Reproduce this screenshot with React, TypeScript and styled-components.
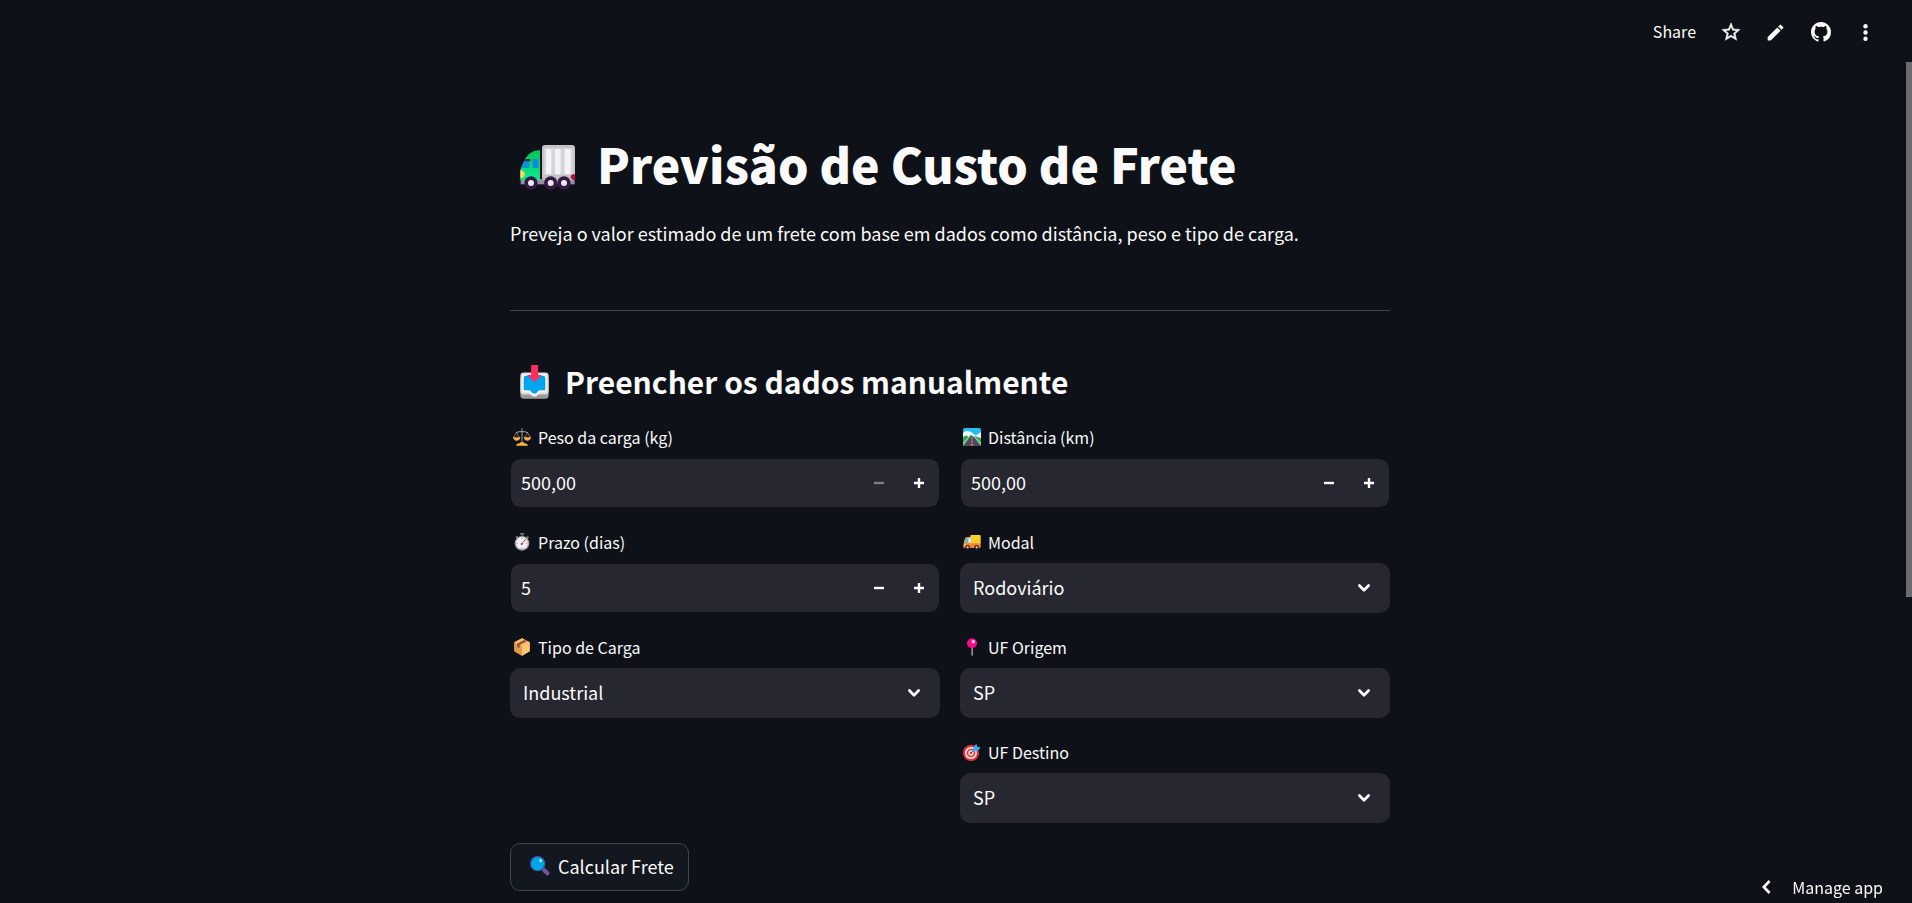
import React, { useId, useState } from "react";
import styled, { createGlobalStyle } from "styled-components";

const color = {
  page: "#0e1117",
  field: "#262730",
  text: "#fafafa",
  muted: "#7d7e85",
  line: "#42444c",
  button: "#13171f",
  buttonLine: "#41444c",
  thumb: "#6b6c70",
};

const GlobalStyle = createGlobalStyle`
  *, *::before, *::after { box-sizing: border-box; }
  body {
    margin: 0;
    background: ${color.page};
    color: ${color.text};
    font-family: "Noto Sans CJK SC", "Noto Sans", sans-serif;
    font-size: 18px;
    line-height: 30px;
  }
  button, input, select { font: inherit; color: inherit; }
`;

const Page = styled.div`
  min-height: 100vh;
  padding-right: 12px;
`;

const Toolbar = styled.header`
  display: flex;
  justify-content: flex-end;
  align-items: center;
  height: 64px;
  padding-right: 12px;
`;

const ToolButton = styled.button<{ $text?: boolean }>`
  display: flex;
  align-items: center;
  justify-content: center;
  min-width: 45px;
  height: 40px;
  padding: ${(p) => (p.$text ? "0 12px 2px" : "0")};
  border: 0;
  background: none;
  font-size: 16px;
  cursor: pointer;
`;

const Main = styled.main`
  max-width: 880px;
  margin: 0 auto;
  padding-top: 69px;
`;

const Title = styled.h1`
  display: flex;
  align-items: center;
  gap: 21px;
  margin: 0;
  padding: 0 0 6px 10px;
  font-size: 48px;
  line-height: 60px;
  font-weight: 900;
  > svg { margin-top: 8px; }
`;

const Intro = styled.p`
  margin: 19px 0 62px;
`;

const Divider = styled.hr`
  margin: 0 0 50px;
  border: 0;
  border-top: 1px solid ${color.line};
`;

const Subtitle = styled.h2`
  display: flex;
  align-items: center;
  gap: 16px;
  margin: 0 0 20px;
  padding: 0 0 2px 10px;
  font-size: 30px;
  line-height: 40px;
  font-weight: 700;
  > svg { margin-top: 2px; }
`;

const Form = styled.form`
  display: flex;
  flex-direction: column;
  align-items: flex-start;
  gap: 20px;
`;

const Columns = styled.div`
  display: grid;
  grid-template-columns: 1fr 1fr;
  gap: 20px;
  width: 100%;
`;

const Column = styled.div`
  display: flex;
  flex-direction: column;
  gap: 20px;
`;

const Field = styled.div`
  display: flex;
  flex-direction: column;
  gap: 7px;
`;

const FieldLabel = styled.label`
  display: flex;
  align-items: center;
  gap: 7px;
  padding-left: 3px;
  font-size: 16px;
  line-height: 28px;
`;

const NumberBox = styled.div`
  display: flex;
  height: 50px;
  border: 1px solid ${color.page};
  border-radius: 10px;
  background: ${color.field};
  background-clip: padding-box;
`;

const NumberInput = styled.input`
  flex: 1;
  min-width: 0;
  padding: 0 10px 2px;
  border: 0;
  outline: 0;
  background: none;
`;

const StepButton = styled.button`
  display: flex;
  align-items: center;
  justify-content: center;
  width: 40px;
  padding: 0;
  border: 0;
  background: none;
  cursor: pointer;
  &:disabled {
    color: ${color.muted};
    cursor: default;
  }
`;

const SelectBox = styled.div`
  display: grid;
  align-items: center;
  height: 50px;
  border-radius: 10px;
  background: ${color.field};
  > * { grid-area: 1 / 1; }
  > svg {
    justify-self: end;
    margin-right: 20px;
    pointer-events: none;
  }
`;

const Select = styled.select`
  appearance: none;
  width: 100%;
  height: 50px;
  padding: 0 40px 2px 13px;
  border: 0;
  border-radius: 10px;
  outline: 0;
  background: none;
  option { background: ${color.field}; }
`;

const SubmitButton = styled.button`
  display: flex;
  align-items: center;
  gap: 8px;
  height: 48px;
  padding: 0 14px 2px 19px;
  border: 1px solid ${color.buttonLine};
  border-radius: 10px;
  background: ${color.button};
  cursor: pointer;
`;

const ManageButton = styled.button`
  position: fixed;
  right: 17px;
  bottom: 0;
  display: flex;
  align-items: center;
  gap: 21px;
  height: 30px;
  padding: 0 12px 2px;
  border: 0;
  background: ${color.page};
  font-size: 16px;
  cursor: pointer;
`;

const ScrollThumb = styled.div`
  position: fixed;
  top: 62px;
  right: 0;
  width: 6px;
  height: 59.2vh;
  background: ${color.thumb};
`;

/* ---------- toolbar and control icons ---------- */

const StarIcon = () => (
  <svg width="22" height="22" viewBox="0 0 24 24" fill="currentColor" stroke="currentColor" strokeWidth="0.5" aria-hidden="true">
    <path d="M22 9.24l-7.19-.62L12 2 9.19 8.63 2 9.24l5.46 4.73L5.82 21 12 17.27 18.18 21l-1.63-7.03L22 9.24zM12 15.4l-3.76 2.27 1-4.28-3.32-2.88 4.38-.38L12 6.1l1.71 4.04 4.38.38-3.32 2.88 1 4.28L12 15.4z" />
  </svg>
);

const PencilIcon = () => (
  <svg width="21" height="21" viewBox="0 0 24 24" fill="currentColor" aria-hidden="true">
    <path d="M3 17.46v3.04c0 .28.22.5.5.5h3.04c.13 0 .26-.05.35-.15L17.81 9.94l-3.75-3.75L3.15 17.1c-.1.1-.15.22-.15.36zM20.71 7.04a.996.996 0 0 0 0-1.41l-2.34-2.34a.996.996 0 0 0-1.41 0l-1.83 1.83 3.75 3.75 1.83-1.83z" />
  </svg>
);

const GithubIcon = () => (
  <svg width="20" height="20" viewBox="0 0 16 16" fill="currentColor" aria-hidden="true">
    <path d="M8 0C3.58 0 0 3.58 0 8c0 3.54 2.29 6.53 5.47 7.59.4.07.55-.17.55-.38 0-.19-.01-.82-.01-1.49-2.01.37-2.53-.49-2.69-.94-.09-.23-.48-.94-.82-1.13-.28-.15-.68-.52-.01-.53.63-.01 1.08.58 1.23.82.72 1.21 1.87.87 2.33.66.07-.52.28-.87.51-1.07-1.78-.2-3.64-.89-3.64-3.95 0-.87.31-1.59.82-2.15-.08-.2-.36-1.02.08-2.12 0 0 .67-.21 2.2.82.64-.18 1.32-.27 2-.27s1.36.09 2 .27c1.53-1.04 2.2-.82 2.2-.82.44 1.1.16 1.92.08 2.12.51.56.82 1.27.82 2.15 0 3.07-1.87 3.75-3.65 3.95.29.25.54.73.54 1.48 0 1.07-.01 1.93-.01 2.2 0 .21.15.46.55.38A8.01 8.01 0 0 0 16 8c0-4.42-3.58-8-8-8z" />
  </svg>
);

const DotsIcon = () => (
  <svg width="25" height="25" viewBox="0 0 24 24" fill="currentColor" aria-hidden="true">
    <circle cx="12" cy="6" r="2.1" />
    <circle cx="12" cy="12" r="2.1" />
    <circle cx="12" cy="18" r="2.1" />
  </svg>
);

const MinusIcon = () => (
  <svg width="10" height="10" viewBox="0 0 10 10" aria-hidden="true">
    <path d="M0 5h10" stroke="currentColor" strokeWidth="2.4" />
  </svg>
);

const PlusIcon = () => (
  <svg width="10" height="10" viewBox="0 0 10 10" aria-hidden="true">
    <path d="M0 5h10M5 0v10" stroke="currentColor" strokeWidth="2.4" />
  </svg>
);

const ChevronDown = () => (
  <svg width="12" height="8" viewBox="0 0 12 8" fill="none" aria-hidden="true">
    <path d="M1.4 1.5L6 6.2l4.6-4.7" stroke="currentColor" strokeWidth="2.7" strokeLinecap="round" strokeLinejoin="round" />
  </svg>
);

const ChevronLeft = () => (
  <svg width="9" height="14" viewBox="0 0 9 14" fill="none" aria-hidden="true">
    <path d="M7.6 1L1.8 7l5.8 6" stroke="currentColor" strokeWidth="2.6" />
  </svg>
);

/* ---------- pictograms ---------- */

const LorryPicture = () => (
  <svg width="56" height="45" viewBox="0 0 168 135" aria-hidden="true">
    <defs>
      <linearGradient id="cab" x1="0" y1="0" x2="0" y2="1">
        <stop offset="0" stopColor="#00c455" />
        <stop offset="1" stopColor="#12e892" />
      </linearGradient>
    </defs>
    <rect x="2" y="102" width="162" height="16" fill="#998ea4" />
    <rect x="66" y="0" width="99" height="106" rx="9" fill="#c5c2c9" />
    <rect x="71" y="9" width="89" height="80" rx="3" fill="#d5d4d8" />
    <rect x="78" y="12" width="16" height="76" rx="5" fill="#f4f4f4" />
    <rect x="105" y="12" width="17" height="76" rx="5" fill="#f4f4f4" />
    <rect x="134" y="12" width="18" height="76" rx="5" fill="#f4f4f4" />
    <path d="M60 15C34 17 22 29 13 47L1 74v32h59z" fill="url(#cab)" />
    <path d="M14 47h14v21H3z" fill="#0a8de0" />
    <path d="M17 42h14v7H13z" fill="#29264c" />
    <rect x="38" y="42" width="17" height="27" rx="3" fill="#0a8de0" />
    <path d="M1 76c9 0 13 5 13 12s-5 11-13 11z" fill="#ffd95a" />
    <path d="M165 87c-9 0-13 4-13 9s5 10 13 10z" fill="#b80f45" />
    {[33, 92, 132].map((x) => (
      <g key={x}>
        <circle cx={x} cy="114" r="20" fill="#321b41" />
        <circle cx={x} cy="114" r="9" fill="#eee8f5" />
      </g>
    ))}
  </svg>
);

const InboxPicture = () => (
  <svg width="29" height="34" viewBox="0 0 86 101" aria-hidden="true">
    <rect x="1" y="34" width="84" height="66" rx="10" fill="#9b9b9b" />
    <rect x="1" y="22" width="84" height="66" rx="10" fill="#dcdcdf" />
    <path d="M15 26h56q10 0 10 10v40q0 6-6 6H61c-7 0-6 12-18 12S32 82 25 82H11q-6 0-6-6V36q0-10 10-10z" fill="#f1f1f6" />
    <path d="M18 32h50q7 0 7 7v32q0 4-4 4H59c-8 0-6 10-16 10S35 75 27 75H15q-4 0-4-4V39q0-7 7-7z" fill="#00a6ed" />
    <path d="M33 0h21v30h11L43 51 21 30h12z" fill="#f92f60" />
  </svg>
);

const ScalesPicture = () => (
  <svg width="18" height="18" viewBox="0 0 54 54" fill="none" aria-hidden="true">
    <path d="M27 1v42" stroke="#a29da9" strokeWidth="3" />
    <path d="M9 14q9-4 18-3 9-1 18 3" stroke="#a7a2ad" strokeWidth="3" />
    <path d="M10 14L2 28M10 14l9 14M44 14l-9 14M44 14l8 14" stroke="#b8a67a" strokeWidth="2" />
    <path d="M0 27h22c-1 15-21 15-22 0zM32 27h22c-1 15-21 15-22 0z" fill="#f0b445" />
    <path d="M3 28h16M35 28h16" stroke="#8a6334" strokeWidth="2" />
    <path d="M22 43h10l2 3c7 1 10 3 11 7H9c1-4 4-6 11-7z" fill="#ffb636" />
  </svg>
);

const RoadPicture = () => (
  <svg width="18" height="18" viewBox="0 0 54 54" aria-hidden="true">
    <rect width="54" height="54" rx="6" fill="#28bdf0" />
    <path d="M0 20l15-8 16 10 23 4v22q0 6-6 6H6q-6 0-6-6z" fill="#3a9a61" />
    <path d="M54 12v19L36 24z" fill="#e4f3f4" />
    <path d="M0 14l11-6 12 3 17 13-8 4-8-8-8 8-5-6-11 5z" fill="#e9fbff" />
    <path d="M20 26h14l19 28H3z" fill="#54475f" />
    <path d="M0 53l20-25v-5L0 43zM54 53L33 28v-5l21 20z" fill="#77cf8c" />
    <path d="M27 29v5M27 38v5M27 47v7" stroke="#f5c24e" strokeWidth="3" />
  </svg>
);

const StopwatchPicture = () => (
  <svg width="18" height="18" viewBox="0 0 54 54" aria-hidden="true">
    <rect x="21" y="0" width="13" height="5" rx="2" fill="#777080" />
    <rect x="24" y="3" width="7" height="9" fill="#55505e" />
    <path d="M7 13l5-5 5 5-5 5zM39 13l5-5 4 5-4 5z" fill="#77717e" />
    <circle cx="27" cy="31" r="22" fill="#a8a2ad" />
    <circle cx="27" cy="30" r="18" fill="#f4f1f5" />
    <path d="M26 33l12-14" stroke="#e8344f" strokeWidth="3" strokeLinecap="round" />
    <circle cx="26" cy="33" r="3" fill="#5a4a63" />
    <path d="M27 14v4M27 43v4M11 31h4M40 31h4" stroke="#77717e" strokeWidth="2" />
  </svg>
);

const TruckPicture = () => (
  <svg width="18" height="18" viewBox="0 0 54 54" aria-hidden="true">
    <rect x="22" y="6" width="31" height="28" rx="3" fill="#ffcf30" />
    <path d="M25 12H14Q5 12 3 27l-1 7h23z" fill="#ff9a3a" />
    <path d="M17 15h-3q-7 1-9 14h10z" fill="#42c4f5" />
    <path d="M17 15h7v14h-8z" fill="#d9ecf3" />
    <path d="M2 31h51v11q0 3-4 3H5q-4 0-4-3z" fill="#f4882b" />
    <path d="M2 34h6v4H2z" fill="#ffdf62" />
    <circle cx="14" cy="43" r="7" fill="#48213c" />
    <circle cx="41" cy="43" r="7" fill="#48213c" />
    <circle cx="14" cy="43" r="3" fill="#e8dde8" />
    <circle cx="41" cy="43" r="3" fill="#e8dde8" />
  </svg>
);

const ParcelPicture = () => (
  <svg width="18" height="18" viewBox="0 0 54 54" aria-hidden="true">
    <path d="M27 1L4 13v27l23 13 23-13V13z" fill="#f2a64c" />
    <path d="M27 1L4 13l23 12 23-12z" fill="#f7bd6b" />
    <path d="M27 25l23-12v27L27 53z" fill="#ffc96e" />
    <path d="M4 13l23 12v28L4 40z" fill="#e39a4d" />
    <path d="M35 5L12 17v9l8 5V21L43 9z" fill="#9a563a" />
  </svg>
);

const PinPicture = () => (
  <svg width="18" height="18" viewBox="0 0 54 54" aria-hidden="true">
    <rect x="25" y="25" width="5" height="28" rx="2" fill="#918a98" />
    <circle cx="27" cy="16" r="15" fill="#f20d8c" />
    <circle cx="31" cy="11" r="5" fill="#ffd3ef" />
  </svg>
);

const TargetPicture = () => (
  <svg width="18" height="18" viewBox="0 0 54 54" aria-hidden="true">
    <circle cx="24" cy="30" r="24" fill="#e8343c" />
    <circle cx="24" cy="30" r="18" fill="#fbe6e6" />
    <circle cx="24" cy="30" r="13" fill="#e8343c" />
    <circle cx="24" cy="30" r="8" fill="#fbe6e6" />
    <circle cx="24" cy="30" r="4" fill="#e8343c" />
    <path d="M24 30l14-15" stroke="#2c6f9f" strokeWidth="3" />
    <path d="M29 25l2-12L40 2l3 9 10 3-11 11z" fill="#37aef0" />
  </svg>
);

const LensPicture = () => (
  <svg width="20" height="20" viewBox="0 0 60 60" aria-hidden="true">
    <path d="M36 36l6 6" stroke="#8a6f9f" strokeWidth="6" />
    <path d="M43 43l9 9" stroke="#6d5398" strokeWidth="13" strokeLinecap="round" />
    <circle cx="23" cy="23" r="23" fill="#3a5f9f" />
    <circle cx="23" cy="23" r="19" fill="#00a6ed" />
    <ellipse cx="32" cy="14" rx="4" ry="5" fill="#b9ecff" />
  </svg>
);

/* ---------- form controls ---------- */

type NumberFieldProps = {
  label: string;
  icon: React.ReactNode;
  initial: number;
  min: number;
  digits?: number;
};

function NumberField({ label, icon, initial, min, digits = 0 }: NumberFieldProps) {
  const id = useId();
  const [value, setValue] = useState(initial);
  return (
    <Field>
      <FieldLabel htmlFor={id}>
        {icon}
        {label}
      </FieldLabel>
      <NumberBox>
        <NumberInput
          id={id}
          inputMode="decimal"
          value={value.toFixed(digits).replace(".", ",")}
          onChange={(e) => setValue(Number(e.target.value.replace(",", ".")) || min)}
        />
        <StepButton type="button" aria-label="Diminuir" disabled={value <= min} onClick={() => setValue(value - 1)}>
          <MinusIcon />
        </StepButton>
        <StepButton type="button" aria-label="Aumentar" onClick={() => setValue(value + 1)}>
          <PlusIcon />
        </StepButton>
      </NumberBox>
    </Field>
  );
}

type SelectFieldProps = { label: string; icon: React.ReactNode; options: string[] };

function SelectField({ label, icon, options }: SelectFieldProps) {
  const id = useId();
  return (
    <Field>
      <FieldLabel htmlFor={id}>
        {icon}
        {label}
      </FieldLabel>
      <SelectBox>
        <Select id={id}>
          {options.map((o) => (
            <option key={o}>{o}</option>
          ))}
        </Select>
        <ChevronDown />
      </SelectBox>
    </Field>
  );
}

export default function App() {
  return (
    <Page>
      <GlobalStyle />
      <Toolbar>
        <ToolButton $text>Share</ToolButton>
        <ToolButton aria-label="Favorite"><StarIcon /></ToolButton>
        <ToolButton aria-label="Edit"><PencilIcon /></ToolButton>
        <ToolButton aria-label="GitHub"><GithubIcon /></ToolButton>
        <ToolButton aria-label="Menu"><DotsIcon /></ToolButton>
      </Toolbar>
      <Main>
        <Title>
          <LorryPicture />
          Previsão de Custo de Frete
        </Title>
        <Intro>Preveja o valor estimado de um frete com base em dados como distância, peso e tipo de carga.</Intro>
        <Divider />
        <Subtitle>
          <InboxPicture />
          Preencher os dados manualmente
        </Subtitle>
        <Form onSubmit={(e) => e.preventDefault()}>
          <Columns>
            <Column>
              <NumberField label="Peso da carga (kg)" icon={<ScalesPicture />} initial={500} min={500} digits={2} />
              <NumberField label="Prazo (dias)" icon={<StopwatchPicture />} initial={5} min={1} />
              <SelectField label="Tipo de Carga" icon={<ParcelPicture />} options={["Industrial"]} />
            </Column>
            <Column>
              <NumberField label="Distância (km)" icon={<RoadPicture />} initial={500} min={10} digits={2} />
              <SelectField label="Modal" icon={<TruckPicture />} options={["Rodoviário"]} />
              <SelectField label="UF Origem" icon={<PinPicture />} options={["SP"]} />
              <SelectField label="UF Destino" icon={<TargetPicture />} options={["SP"]} />
            </Column>
          </Columns>
          <SubmitButton type="submit">
            <LensPicture />
            Calcular Frete
          </SubmitButton>
        </Form>
      </Main>
      <ManageButton>
        <ChevronLeft />
        Manage app
      </ManageButton>
      <ScrollThumb />
    </Page>
  );
}
